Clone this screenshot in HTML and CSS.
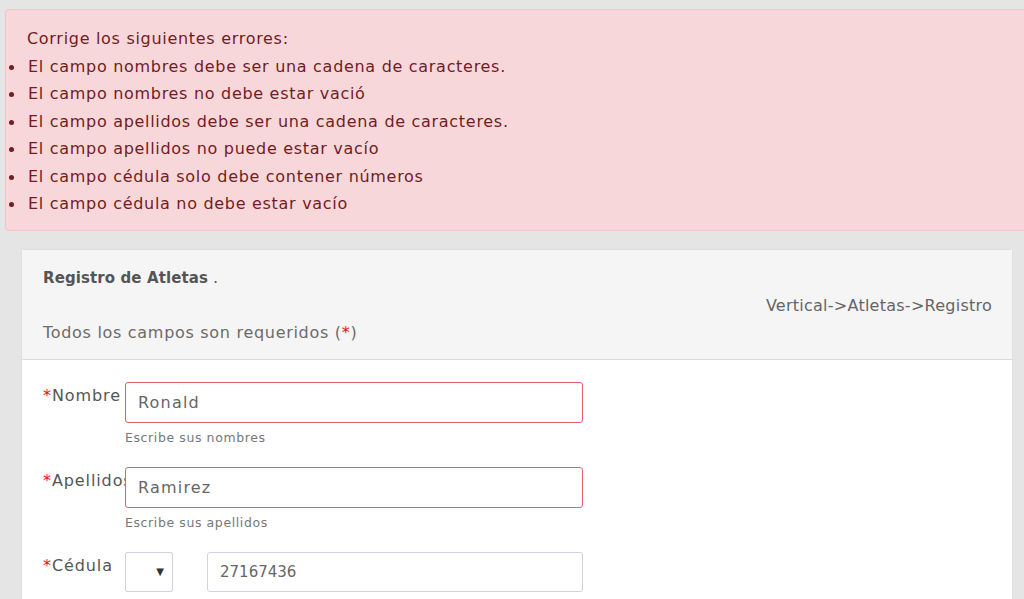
FILE: index.html
```html
<!DOCTYPE html>
<html lang="es">
<head>
<meta charset="utf-8">
<title>Registro de Atletas</title>
<link rel="stylesheet" href="styles.css">
</head>
<body>
<div class="page">
  <div class="alert">
    <p class="alert-title">Corrige los siguientes errores:</p>
    <ul class="alert-list">
      <li>El campo nombres debe ser una cadena de caracteres.</li>
      <li>El campo nombres no debe estar vació</li>
      <li>El campo apellidos debe ser una cadena de caracteres.</li>
      <li>El campo apellidos no puede estar vacío</li>
      <li>El campo cédula solo debe contener números</li>
      <li>El campo cédula no debe estar vacío</li>
    </ul>
  </div>

  <div class="card">
    <div class="card-header">
      <div class="card-title"><strong>Registro de Atletas</strong> .</div>
      <div class="breadcrumb">Vertical-&gt;Atletas-&gt;Registro</div>
      <div class="card-sub">Todos los campos son requeridos (<span class="req">*</span>)</div>
    </div>
    <div class="card-body">
      <div class="form-row">
        <label class="form-label"><span class="req">*</span>Nombre</label>
        <div class="form-field">
          <div class="input input-error">Ronald</div>
          <div class="help">Escribe sus nombres</div>
        </div>
      </div>
      <div class="form-row">
        <label class="form-label"><span class="req">*</span>Apellidos</label>
        <div class="form-field">
          <div class="input input-error">Ramirez</div>
          <div class="help">Escribe sus apellidos</div>
        </div>
      </div>
      <div class="form-row">
        <label class="form-label"><span class="req">*</span>Cédula</label>
        <div class="form-field field-inline">
          <div class="select"><span class="caret">▼</span></div>
          <div class="input input-number">27167436</div>
        </div>
      </div>
    </div>
  </div>
</div>
</body>
</html>
```

FILE: styles.css
```css
html, body {
  margin: 0;
  padding: 0;
}
body {
  background: #e5e5e5;
  font-family: "DejaVu Sans", "Noto Sans", sans-serif;
  color: #666;
  overflow: hidden;
  height: 599px;
}
.page {
  width: 1024px;
  padding-top: 9px;
}
.alert {
  margin: 0 -20px 0 5px;
  background: #f8d7da;
  border: 1px solid #f3c3c8;
  border-radius: 4px;
  color: #721c24;
  padding: 15px 20px 12px 21px;
  font-size: 16px;
  letter-spacing: 0.7px;
  line-height: 27.5px;
}
.alert-title {
  margin: 0;
}
.alert-list {
  margin: 0;
  padding: 0;
  list-style: none;
}
.alert-list li {
  display: flex;
  margin-left: -21px;
}
.alert-list li::before {
  content: "";
  width: 5px;
  height: 5px;
  border-radius: 50%;
  background: #721c24;
  margin: 12px 14px 0 3px;
  flex: none;
}
.card {
  margin: 18px 11px 0 21px;
  background: #fff;
  border: 1px solid #dedede;
  border-radius: 3px;
}
.card-header {
  background: #f5f5f5;
  border-bottom: 1px solid #dadada;
  padding: 14px 20px 13px 21px;
  font-size: 16px;
  line-height: 27px;
}
.card-title {
  color: #555;
}
.card-title strong {
  font-weight: bold;
  font-size: 15px;
  letter-spacing: 0.1px;
}
.breadcrumb {
  text-align: right;
  color: #666;
  letter-spacing: 0.25px;
}
.card-sub {
  color: #6b6b6b;
  letter-spacing: 0.7px;
}
.req {
  color: #e8101a;
}
.card-body {
  padding: 22px 21px 10px;
}
.form-row {
  display: flex;
  margin-bottom: 20px;
}
.form-label {
  width: 82px;
  flex: none;
  white-space: nowrap;
  font-size: 16px;
  letter-spacing: 0.9px;
  line-height: 27px;
  color: #555;
}
.form-field {
  width: 458px;
}
.input {
  height: 41px;
  box-sizing: border-box;
  border: 1px solid #ced4da;
  border-radius: 3px;
  background: #fff;
  padding: 0 12px;
  font-size: 16px;
  letter-spacing: 1.2px;
  line-height: 39px;
  color: #666;
}
.input-error {
  border-color: #e2606c;
}
.help {
  font-size: 12.5px;
  letter-spacing: 0.6px;
  line-height: 18px;
  margin-top: 6px;
  color: #777;
}
.field-inline {
  display: flex;
  gap: 34px;
}
.select {
  width: 48px;
  height: 40px;
  box-sizing: border-box;
  border: 1px solid #ced4da;
  border-radius: 2px;
  background: #fff;
  display: flex;
  align-items: center;
  justify-content: flex-end;
  padding-right: 8px;
}
.caret {
  font-size: 10px;
  color: #333;
  letter-spacing: 0;
}
.input-number {
  flex: 1;
  height: 40px;
  line-height: 38px;
  font-size: 15px;
  letter-spacing: 0;
}
```
